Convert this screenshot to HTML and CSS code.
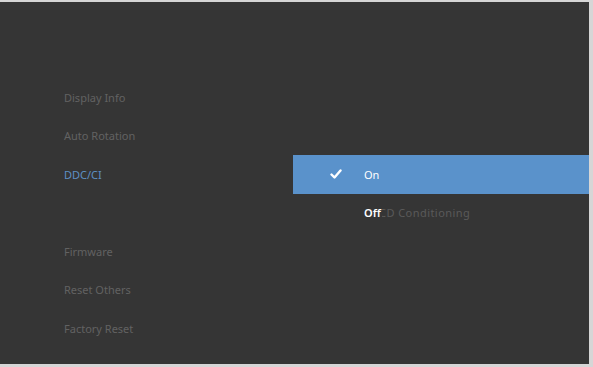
FILE: index.html
```html
<!DOCTYPE html>
<html lang="en">
<head>
    <meta charset="UTF-8">
    <title>Display Menu</title>
    <link rel="stylesheet" href="styles.css">
</head>
<body>
    <div class="osd">
        <div class="menu">
            <div class="row"><span class="item">Display Info</span><span></span></div>
            <div class="row"><span class="item">Auto Rotation</span><span></span></div>
            <div class="row">
                <span class="item active">DDC/CI</span>
                <span class="option selected">
                    <svg class="check" width="12" height="10" viewBox="0 0 12 10"><path d="M1.5 5.5 L4.5 8.5 L10.5 1.5" fill="none" stroke="#fff" stroke-width="2.4" stroke-linecap="round" stroke-linejoin="round"/></svg>
                    <span class="label">On</span>
                </span>
            </div>
            <div class="row">
                <span class="item"></span>
                <span class="option">
                    <span class="label overlap"><span class="under">LCD Conditioning</span><span class="over">Off</span></span>
                </span>
            </div>
            <div class="row"><span class="item">Firmware</span><span></span></div>
            <div class="row"><span class="item">Reset Others</span><span></span></div>
            <div class="row"><span class="item">Factory Reset</span><span></span></div>
        </div>
    </div>
</body>
</html>
```

FILE: styles.css
```css
body { margin: 0; background: #d6d6d6; font-family: "Noto Sans", "DejaVu Sans", sans-serif; font-size: 11px; }
.osd { margin-top: 2px; width: 589px; height: 362px; background: #353535; box-sizing: border-box; padding-top: 76px; }
.menu { display: flex; flex-direction: column; }
.row { display: grid; grid-template-columns: 293px 296px; height: 38.5px; }
.item { display: flex; align-items: center; padding-left: 64px; color: #626262; }
.item.active { color: #5d8fc4; }
.option { display: flex; align-items: center; color: #5a5a5a; }
.option.selected { background: #5a92cb; color: #fff; }
.check { margin-left: 37px; width: 12px; }
.option.selected .label { margin-left: 22px; }
.overlap { position: relative; margin-left: 71px; }
.under { display: inline-block; padding-left: 9px; color: #5a5a5a; letter-spacing: 0.45px; }
.over { position: absolute; left: 0; top: 0; padding-right: 1px; color: #fff; font-weight: 600; background: #353535; }
```
